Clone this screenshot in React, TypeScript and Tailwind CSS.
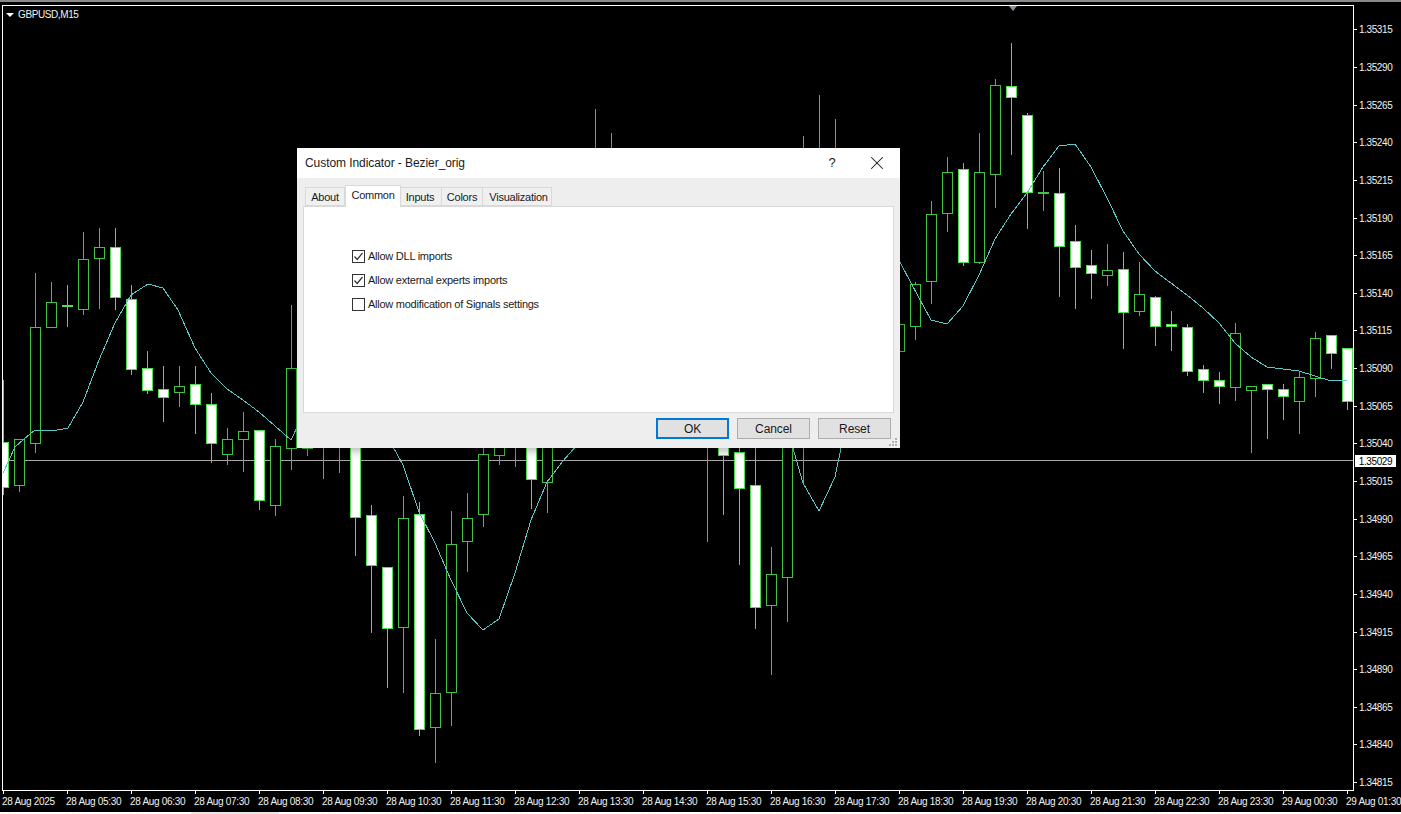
import { X } from "lucide-react";

const c = 1;
const h = 0;

// [slot, white body, wick top, body top, body bottom, wick bottom]
const CANDLES: number[][] = [
  [0, c, 380, 442, 487, 495],
  [1, h, 439, 439, 485, 492],
  [2, h, 273, 327, 443, 453],
  [3, h, 282, 302, 327, 327],
  [4, c, 285, 305, 306, 327],
  [5, h, 232, 259, 309, 315],
  [6, h, 228, 247, 258, 309],
  [7, c, 228, 247, 297, 310],
  [8, c, 285, 299, 369, 375],
  [9, c, 351, 368, 390, 394],
  [10, c, 366, 389, 397, 422],
  [11, h, 366, 386, 392, 407],
  [12, c, 366, 384, 404, 434],
  [13, c, 393, 404, 443, 463],
  [14, h, 428, 439, 454, 465],
  [15, h, 412, 431, 439, 472],
  [16, c, 430, 430, 500, 510],
  [17, h, 439, 446, 505, 516],
  [18, h, 305, 368, 448, 470],
  [19, h, 420, 430, 448, 456],
  [20, h, 420, 430, 440, 479],
  [21, h, 420, 430, 440, 473],
  [22, c, 400, 430, 517, 556],
  [23, c, 505, 515, 565, 633],
  [24, c, 567, 567, 628, 688],
  [25, h, 496, 518, 627, 693],
  [26, c, 502, 514, 729, 736],
  [27, h, 639, 693, 727, 763],
  [28, h, 511, 544, 692, 726],
  [29, h, 493, 518, 541, 572],
  [30, h, 430, 454, 514, 527],
  [31, h, 430, 440, 455, 465],
  [32, h, 430, 440, 446, 467],
  [33, c, 430, 440, 479, 509],
  [34, h, 430, 440, 482, 513],
  [37, h, 109, 200, 300, 350],
  [38, h, 133, 200, 300, 350],
  [44, h, 300, 400, 440, 542],
  [45, c, 300, 440, 455, 515],
  [46, c, 300, 452, 488, 565],
  [47, c, 300, 485, 607, 629],
  [48, h, 547, 574, 605, 675],
  [49, h, 300, 400, 577, 622],
  [50, h, 136, 400, 440, 483],
  [51, h, 95, 200, 300, 350],
  [52, h, 119, 200, 300, 350],
  [56, h, 200, 324, 351, 400],
  [57, h, 282, 284, 326, 340],
  [58, h, 201, 214, 281, 304],
  [59, h, 157, 172, 213, 232],
  [60, c, 163, 169, 262, 266],
  [61, h, 133, 172, 262, 264],
  [62, h, 79, 85, 174, 208],
  [63, c, 43, 86, 97, 155],
  [64, c, 113, 115, 192, 229],
  [65, h, 171, 192, 192, 211],
  [66, c, 168, 193, 246, 297],
  [67, c, 225, 241, 267, 309],
  [68, c, 250, 265, 273, 299],
  [69, h, 244, 270, 275, 286],
  [70, c, 252, 269, 312, 349],
  [71, h, 262, 294, 311, 316],
  [72, c, 296, 297, 326, 346],
  [73, c, 311, 324, 326, 351],
  [74, c, 324, 327, 371, 376],
  [75, c, 365, 369, 380, 393],
  [76, c, 372, 380, 386, 404],
  [77, h, 323, 333, 387, 401],
  [78, h, 386, 386, 390, 453],
  [79, c, 384, 384, 389, 439],
  [80, c, 384, 389, 396, 420],
  [81, h, 371, 377, 401, 434],
  [82, h, 332, 338, 378, 397],
  [83, c, 335, 335, 353, 369],
  [84, c, 348, 348, 401, 410],
];

const CURVE =
  "3,473 15,447 24,439 35,430 52,431 68,428 83,402 99,360 115,323 131,295 148,284 163,288 178,310 195,348 211,373 227,389 243,400 259,412 275,426 291,440 310,400 380,420 392,445 403,465 419,512 435,543 451,580 467,613 483,630 499,619 515,573 531,520 547,482 563,461 577,445 600,400 780,400 792,445 803,483 819,511 835,477 841,448 900,262 911,283 931,320 947,324 963,306 979,275 995,239 1011,214 1027,193 1043,167 1059,146 1075,144 1091,167 1107,198 1123,231 1139,254 1155,271 1171,283 1187,295 1203,308 1219,323 1235,343 1251,357 1267,367 1283,369 1299,371 1315,376 1331,381 1347,380";

const PRICES = [
  "1.35315", "1.35290", "1.35265", "1.35240", "1.35215", "1.35190", "1.35165",
  "1.35140", "1.35115", "1.35090", "1.35065", "1.35040", "1.35015", "1.34990",
  "1.34965", "1.34940", "1.34915", "1.34890", "1.34865", "1.34840", "1.34815",
];

const TIMES = [
  "28 Aug 2025", "28 Aug 05:30", "28 Aug 06:30", "28 Aug 07:30", "28 Aug 08:30",
  "28 Aug 09:30", "28 Aug 10:30", "28 Aug 11:30", "28 Aug 12:30", "28 Aug 13:30",
  "28 Aug 14:30", "28 Aug 15:30", "28 Aug 16:30", "28 Aug 17:30", "28 Aug 18:30",
  "28 Aug 19:30", "28 Aug 20:30", "28 Aug 21:30", "28 Aug 22:30", "28 Aug 23:30",
  "29 Aug 00:30", "29 Aug 01:30",
];

const TABS = [
  { label: "About", width: "w-[40px]" },
  { label: "Common", width: "w-[56px]", active: true },
  { label: "Inputs", width: "w-[41px] pr-[2px]" },
  { label: "Colors", width: "w-[41px]" },
  { label: "Visualization", width: "w-[69px] pl-[3px]" },
];

const OPTIONS = [
  { label: "Allow DLL imports", checked: true },
  { label: "Allow external experts imports", checked: true },
  { label: "Allow modification of Signals settings", checked: false },
];

function Chart() {
  return (
    <svg className="block h-full w-full" viewBox="3 6 1350 784" shapeRendering="crispEdges">
      <line x1="3" x2="1353" y1="460.5" y2="460.5" stroke="#a8a8a8" />
      {CANDLES.map(([slot, white, wickTop, top, bottom, wickBottom]) => {
        const x = 3.5 + slot * 16;
        return (
          <g key={slot} stroke={white ? "#4ee04e" : "#42c442"}>
            <line x1={x} x2={x} y1={wickTop} y2={top} />
            <line x1={x} x2={x} y1={bottom} y2={wickBottom} />
            <rect
              x={x - 5}
              y={top + 0.5}
              width={10}
              height={Math.max(bottom - top, 1)}
              fill={white ? "#ffffff" : "#000000"}
            />
          </g>
        );
      })}
      <polyline points={CURVE} fill="none" stroke="#5cc8c8" strokeWidth="1" />
    </svg>
  );
}

function PriceAxis() {
  return (
    <div className="relative flex w-[48px] shrink-0 flex-col pt-[6px]">
      {PRICES.map((price) => (
        <div key={price} className="flex h-[37.65px] shrink-0 items-center gap-[2px]">
          <span className="h-px w-[3px] bg-white" />
          <span className="text-[10px] tracking-[-0.4px] text-[#f2f2f2]">{price}</span>
        </div>
      ))}
      <div className="absolute left-[1px] top-[450px] flex h-[12px] w-[41px] items-center justify-center bg-white text-[10px] tracking-[-0.4px] text-black">
        1.35029
      </div>
    </div>
  );
}

function TimeAxis() {
  return (
    <div className="flex h-[21px] shrink-0 pl-[3px]">
      {TIMES.map((time) => (
        <div key={time} className="w-16 shrink-0">
          <div className="h-[3px] w-px bg-white" />
          <div className="ml-[-1px] mt-[1px] whitespace-nowrap text-[10px] leading-[13px] tracking-[-0.3px] text-[#f2f2f2]">
            {time}
          </div>
        </div>
      ))}
    </div>
  );
}

function Dialog() {
  return (
    <div className="absolute left-[297px] top-[148px] flex h-[300px] w-[603px] flex-col bg-[#eeeeee] text-[#1a1a1a] shadow-[0_2px_10px_rgba(0,0,0,0.35)]">
      <div className="flex h-[30px] shrink-0 items-center bg-white pl-2">
        <span className="flex-1 text-[12px] tracking-[-0.07px]">Custom Indicator - Bezier_orig</span>
        <span className="w-[16px] text-center text-[13px]">?</span>
        <X className="ml-[26px] mr-[12px] h-[22px] w-[22px]" strokeWidth={1.1} />
      </div>
      <div className="flex h-[28px] shrink-0 items-end pl-2">
        {TABS.map((tab) => (
          <div
            key={tab.label}
            className={
              tab.active
                ? `${tab.width} z-10 -mb-px flex h-[22px] items-center justify-center border border-b-0 border-[#d9d9d9] bg-white pb-[2px] text-[11px] tracking-[-0.25px]`
                : `${tab.width} flex h-[19px] items-center justify-center border border-l-0 border-[#d9d9d9] bg-[#f0f0f0] pt-[1px] text-[11px] tracking-[-0.25px] first:border-l`
            }
          >
            {tab.label}
          </div>
        ))}
      </div>
      <div className="mx-[6px] flex h-[207px] shrink-0 flex-col gap-[11px] border border-[#d9d9d9] bg-white pl-[48px] pt-[43px]">
        {OPTIONS.map((option) => (
          <label key={option.label} className="flex h-[13px] items-center gap-[3px] text-[11px] tracking-[-0.25px]">
            <span className="flex h-[13px] w-[13px] shrink-0 items-center justify-center border border-[#333333] bg-white">
              {option.checked && (
                <svg viewBox="0 0 11 11" className="h-[11px] w-[11px]">
                  <path d="M1.5 5.5 L4.2 8.5 L9.5 2" fill="none" stroke="#333333" strokeWidth="1.2" />
                </svg>
              )}
            </span>
            {option.label}
          </label>
        ))}
      </div>
      <div className="relative flex flex-1 items-start justify-end gap-[8px] pr-[9px] pt-[5px]">
        <button className="h-[21px] w-[73px] border-2 border-[#0078d7] bg-[#e1e1e1] text-[12px] tracking-[-0.1px]">OK</button>
        <button className="h-[21px] w-[73px] border border-[#adadad] bg-[#e1e1e1] text-[12px] tracking-[-0.1px]">Cancel</button>
        <button className="h-[21px] w-[73px] border border-[#adadad] bg-[#e1e1e1] text-[12px] tracking-[-0.1px]">Reset</button>
        <svg viewBox="0 0 8 8" className="absolute bottom-[2px] right-[3px] h-[8px] w-[8px]" fill="#b0b0b0">
          <rect x="6" y="0" width="2" height="2" />
          <rect x="3" y="3" width="2" height="2" />
          <rect x="6" y="3" width="2" height="2" />
          <rect x="0" y="6" width="2" height="2" />
          <rect x="3" y="6" width="2" height="2" />
          <rect x="6" y="6" width="2" height="2" />
        </svg>
      </div>
    </div>
  );
}

export default function App() {
  return (
    <div className="relative flex h-[814px] w-[1401px] flex-col overflow-hidden bg-black font-['Liberation_Sans',sans-serif]">
      <div className="h-[2px] shrink-0 bg-[#8a8a8a]" />
      <div className="h-[3px] shrink-0" />
      <div className="flex h-[786px] shrink-0 pl-[2px]">
        <div className="relative w-[1352px] shrink-0 overflow-hidden border border-white">
          <Chart />
          <div className="absolute left-[3px] top-[1px] flex items-center gap-[4px] text-[10px] tracking-[-0.4px] text-[#f2f2f2]">
            <span className="h-0 w-0 border-x-[4px] border-t-[4px] border-x-transparent border-t-white" />
            GBPUSD,M15
          </div>
          <span className="absolute left-[1006px] top-0 h-0 w-0 border-x-[4px] border-t-[5px] border-x-transparent border-t-[#8a8f99]" />
        </div>
        <PriceAxis />
      </div>
      <TimeAxis />
      <div className="flex h-[2px] shrink-0">
        <div className="w-[191px] bg-white" />
        <div className="w-[88px] bg-[#e8e8e8]" />
        <div className="flex-1 bg-white" />
      </div>
      <Dialog />
    </div>
  );
}
